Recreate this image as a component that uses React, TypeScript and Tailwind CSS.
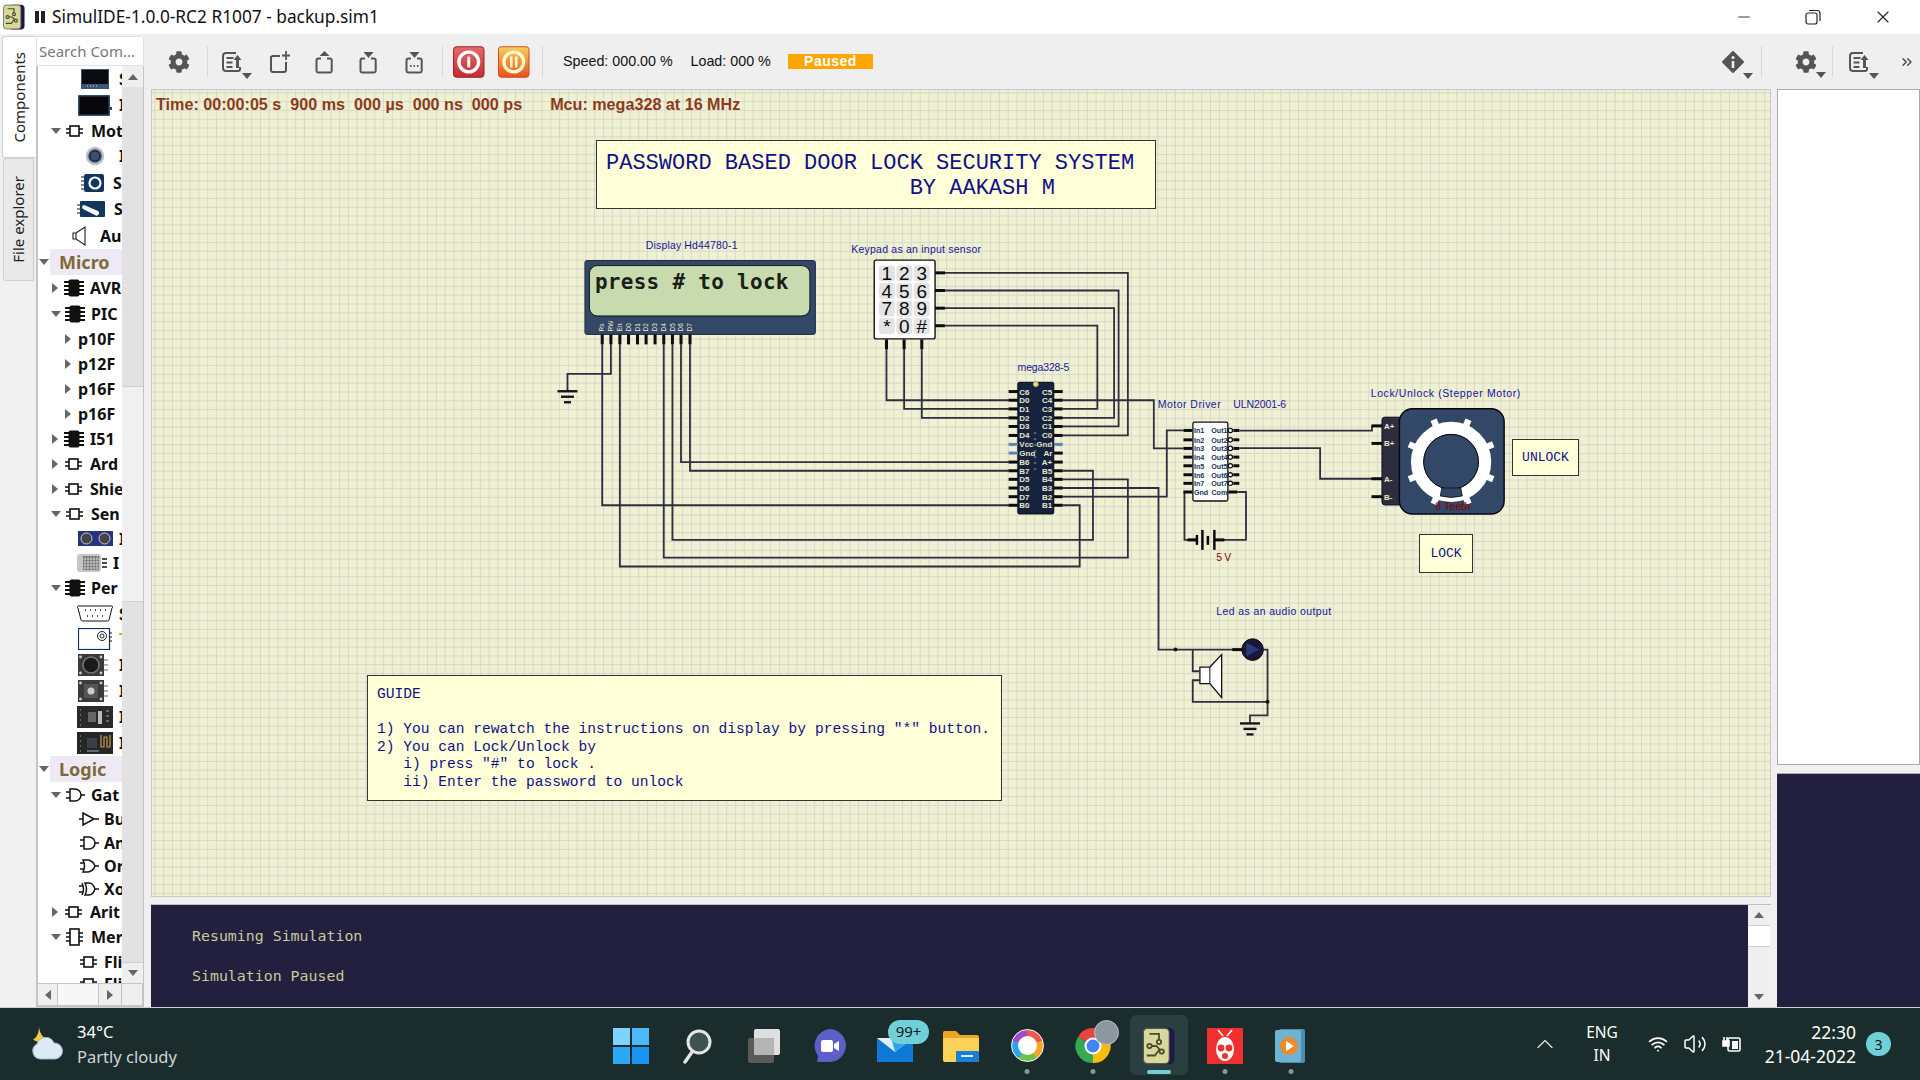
import { ReactNode } from "react";
import { Wifi, Volume2, ChevronUp, ChevronsRight, Minus, X } from "lucide-react";
import { FaCog } from "react-icons/fa";

const wires = [
  "610,344 610,373.5 566.5,373.5 566.5,391",
  "601.3,344 601.3,505.3 1009,505.3",
  "619,344 619,566.7 1080,566.7 1080,505.3 1063,505.3",
  "663,344 663,557.7 1128.3,557.7 1128.3,479.3 1063,479.3",
  "671.7,344 671.7,540 1093.3,540 1093.3,470.7 1063,470.7",
  "680.3,344 680.3,462 1009,462",
  "689.3,344 689.3,470.7 1009,470.7",
  "886.3,349 886.3,400 1009,400",
  "904,349 904,408.7 1009,408.7",
  "921.7,349 921.7,417.7 1009,417.7",
  "945,272.3 1128.3,272.3 1128.3,435.3 1063,435.3",
  "945,290 1119,290 1119,426.3 1063,426.3",
  "945,307.7 1114.5,307.7 1114.5,417.7 1063,417.7",
  "945,325.3 1097.7,325.3 1097.7,408.7 1063,408.7",
  "1063,400 1154.3,400 1154.3,448.3 1184,448.3",
  "1063,496.7 1167.3,496.7 1167.3,430.3 1184,430.3",
  "1063,488 1159,488 1159,650 1242,650",
  "1185,492 1185,540 1197,540",
  "1215,540 1246.7,540 1246.7,492 1238,492",
  "1240,430.5 1373,430.5 1373,425.7",
  "1240,448 1321,448 1321,478.7 1373,478.7",
  "1193.3,650 1193.3,671.7 1200,671.7",
  "1200,680.7 1193.3,680.7 1193.3,702.3 1268.3,702.3",
  "1264,650 1268.3,650 1268.3,716 1250.7,716 1250.7,724",
];

const lcdPins = [
  [601.3, "Rs"], [610, "RW"], [619, "En"], [627.7, "D0"], [636.7, "D1"], [645.3, "D2"],
  [654.3, "D3"], [663, "D4"], [671.7, "D5"], [680.3, "D6"], [689.3, "D7"],
] as const;

const mcuY = [391.3, 400, 408.7, 417.7, 426.3, 435.3, 444.3, 453, 462, 470.7, 479.3, 488, 496.7, 505.3];
const mcuLeft = ["C6", "D0", "D1", "D2", "D3", "D4", "Vcc", "Gnd", "B6", "B7", "D5", "D6", "D7", "B0"];
const mcuRight = ["C5", "C4", "C3", "C2", "C1", "C0", "Gnd", "Ar", "A+", "B5", "B4", "B3", "B2", "B1"];
const ulnY = [430.3, 439.7, 448.3, 457, 465.7, 474.7, 483.3];
const keys = ["1", "2", "3", "4", "5", "6", "7", "8", "9", "*", "0", "#"];

function Ground({ x, y }: { x: number; y: number }) {
  return (
    <g stroke="#15151f" strokeWidth="2.4">
      <line x1={x - 10} x2={x + 10} y1={y} y2={y} />
      <line x1={x - 6.5} x2={x + 6.5} y1={y + 5.5} y2={y + 5.5} />
      <line x1={x - 3.5} x2={x + 3.5} y1={y + 11} y2={y + 11} />
    </g>
  );
}

function Schematic() {
  return (
    <svg
      viewBox="151 89 1620 808"
      className="absolute inset-0 h-full w-full font-['Liberation_Sans',sans-serif]"
    >
      <g fill="none" stroke="#2e2e3e" strokeWidth="1.8">
        {wires.map((w) => (
          <polyline key={w} points={w} />
        ))}
      </g>

      {/* lcd */}
      <text x="645" y="248.5" fontSize="10.5" fill="#16169a" textLength="92">Display Hd44780-1</text>
      <rect x="584" y="260" width="231" height="74" rx="2" fill="#334766" stroke="#1d2a40" />
      <rect x="588.5" y="265" width="221" height="50.5" rx="8" fill="#c8dbae" stroke="#10151c" />
      <text x="594" y="288" fontSize="21" fontWeight="bold" fill="#1a2018" textLength="194" className="font-['DejaVu_Sans_Mono',monospace]">press # to lock</text>
      {lcdPins.map(([x, name]) => (
        <g key={name}>
          <line x1={x} x2={x} y1="334" y2="344" stroke="#0c0c10" strokeWidth="3" />
          <text transform={`translate(${x + 2.3} 331) rotate(-90)`} fontSize="6.5" fill="#efeccb">{name}</text>
        </g>
      ))}
      <Ground x={566.5} y={391} />

      {/* keypad */}
      <text x="851" y="252" fontSize="10.5" fill="#16169a" textLength="130">Keypad as an input sensor</text>
      <rect x="874" y="259.5" width="61" height="79" rx="2" fill="#fff" stroke="#111" strokeWidth="1.4" />
      {keys.map((k, i) => {
        const x = 878.7 + (i % 3) * 17.5;
        const y = 265 + Math.floor(i / 3) * 17.5;
        return (
          <g key={k}>
            <rect x={x} y={y} width="16" height="16" rx="3" fill="#e4e4e4" />
            <text x={x + 8} y={y + 14.8} fontSize="19" textAnchor="middle" fill="#0a0a0a">{k}</text>
          </g>
        );
      })}
      {[272.3, 290, 307.7, 325.3].map((y) => (
        <line key={y} x1="935" x2="945" y1={y} y2={y} stroke="#0c0c10" strokeWidth="3" />
      ))}
      {[886.3, 904, 921.7].map((x) => (
        <line key={x} x1={x} x2={x} y1="339" y2="349" stroke="#0c0c10" strokeWidth="3" />
      ))}

      {/* mcu */}
      <text x="1017.7" y="370.5" fontSize="10.5" fill="#16169a" textLength="52">mega328-5</text>
      <rect x="1018" y="382" width="36" height="132" rx="1.5" fill="#16233f" stroke="#05070f" />
      <circle cx="1036" cy="384" r="2.5" fill="#f2e840" stroke="#98a0b0" />
      {mcuY.map((y, i) => (
        <g key={y}>
          <line x1="1008.7" x2="1018" y1={y} y2={y} stroke={i === 6 || i === 7 ? "#5f86b3" : "#0c0c10"} strokeWidth="3" />
          <line x1="1054" x2="1063" y1={y} y2={y} stroke={i === 6 ? "#5f86b3" : "#0c0c10"} strokeWidth="3" />
          <text x="1019.5" y={y + 3} fontSize="8" fontWeight="bold" fill="#e9e5c8">{mcuLeft[i]}</text>
          <text x="1052.5" y={y + 3} fontSize="8" fontWeight="bold" fill="#e9e5c8" textAnchor="end">{mcuRight[i]}</text>
        </g>
      ))}
      {[432, 438, 444, 450, 456, 462, 468].map((y) => (
        <rect key={y} x="1034" y={y} width="2.5" height="2" fill="#55607a" />
      ))}

      {/* driver */}
      <text x="1158.3" y="407.5" fontSize="10.5" fill="#16169a" textLength="63">Motor Driver</text>
      <text x="1234" y="407.5" fontSize="10.5" fill="#16169a" textLength="53">ULN2001-6</text>
      <rect x="1193.5" y="422" width="35" height="79" rx="1.5" fill="#fff" stroke="#111" strokeWidth="1.3" />
      {ulnY.map((y, i) => (
        <g key={y}>
          <line x1="1184" x2="1193" y1={y} y2={y} stroke="#0c0c10" strokeWidth="3" />
          <line x1="1234" x2="1240" y1={y} y2={y} stroke="#0c0c10" strokeWidth="3" />
          <circle cx="1231" cy={y} r="2.2" fill="#fff" stroke="#0c0c10" strokeWidth="1.2" />
          <text x="1194.5" y={y + 3} fontSize="7.2" fontWeight="bold" fill="#15365a">{`In${i + 1}`}</text>
          <text x="1228.2" y={y + 3} fontSize="7.2" fontWeight="bold" fill="#15365a" textAnchor="end">{`Out${i + 1}`}</text>
        </g>
      ))}
      <line x1="1184" x2="1193" y1="492" y2="492" stroke="#0c0c10" strokeWidth="3" />
      <line x1="1229" x2="1238" y1="492" y2="492" stroke="#0c0c10" strokeWidth="3" />
      <text x="1194.5" y="495" fontSize="7.2" fontWeight="bold" fill="#15365a">Gnd</text>
      <text x="1228" y="495" fontSize="7.2" fontWeight="bold" fill="#15365a" textAnchor="end">Com</text>

      {/* battery */}
      <g stroke="#0c0c10">
        <line x1="1188" x2="1197" y1="540" y2="540" strokeWidth="3" />
        <line x1="1215" x2="1225" y1="540" y2="540" strokeWidth="3" />
        <line x1="1197.5" x2="1197.5" y1="535" y2="545" strokeWidth="2.5" />
        <line x1="1203" x2="1203" y1="530" y2="550" strokeWidth="2.5" />
        <line x1="1208.5" x2="1208.5" y1="536" y2="545" strokeWidth="2.5" />
        <line x1="1215" x2="1215" y1="530" y2="550" strokeWidth="2.5" />
      </g>
      <text x="1217" y="561" fontSize="10.5" fill="#8b0000" textLength="15">5 V</text>

      {/* stepper */}
      <text x="1371.7" y="396.5" fontSize="10.5" fill="#16169a" textLength="150">Lock/Unlock  (Stepper Motor)</text>
      <rect x="1383" y="417" width="20" height="88" rx="3" fill="#2d2d40" stroke="#111" />
      <rect x="1400.5" y="408.5" width="105" height="105.5" rx="13" fill="#334766" stroke="#05070f" strokeWidth="1.4" />
      {[425.7, 443.3, 478.7, 496.7].map((y, i) => (
        <g key={y}>
          <line x1="1372.5" x2="1383" y1={y} y2={y} stroke="#0c0c10" strokeWidth="3" />
          <text x="1385" y={y + 3} fontSize="8" fontWeight="bold" fill="#f0e8c0">{["A+", "B+", "A-", "B-"][i]}</text>
        </g>
      ))}
      {[22.5, 67.5, 112.5, 157.5, 202.5, 247.5, 292.5, 337.5].map((a) => (
        <rect key={a} x="1449" y="416" width="6.5" height="10" fill="#fff" transform={`rotate(${a} 1452.3 461.7)`} />
      ))}
      <circle cx="1452.3" cy="461.7" r="34" fill="none" stroke="#fff" strokeWidth="12.5" />
      <circle cx="1452.3" cy="461.7" r="27.5" fill="#334766" stroke="#05070f" />
      <path d="M1443 488 L1462 488 L1463.5 496 Q1452 499 1441.5 496 Z" fill="#334766" stroke="#05070f" strokeWidth="0.8" />
      <text x="1436.5" y="510.5" fontSize="10.5" fill="#8b0000" textLength="35">8 Teeth</text>

      {/* led and speaker */}
      <text x="1217" y="615.5" fontSize="10.5" fill="#16169a" textLength="115">Led as an audio output</text>
      <circle cx="1176" cy="650" r="2" fill="#111" />
      <circle cx="1268.3" cy="702.3" r="2" fill="#111" />
      <line x1="1233" x2="1243" y1="650" y2="650" stroke="#0c0c10" strokeWidth="3" />
      <circle cx="1253.3" cy="650" r="10.8" fill="#1a1738" stroke="#0c0c10" />
      <path d="M1247 643 L1260 650 L1247 657 Z" fill="#2b3a78" />
      <path d="M1200.5 667.5 L1210.5 667.5 L1222.3 655 L1222.3 698 L1210.5 684 L1200.5 684 Z" fill="#fff" stroke="#111" strokeWidth="1.3" />
      <line x1="1210.5" x2="1210.5" y1="667.5" y2="684" stroke="#111" />
      <Ground x={1250.7} y={724} />
    </svg>
  );
}

function Canvas() {
  return (
    <div className="relative h-[808px] overflow-hidden border border-[#c8c8c8] bg-[#f0f0d2] bg-[linear-gradient(to_right,#d8d8cc_1.4px,transparent_1.4px),linear-gradient(to_bottom,#d8d8cc_1.4px,transparent_1.4px)] bg-[size:8.8px_8.8px] bg-[position:2.4px_2.4px]">
      <Schematic />
      <div className="absolute left-[4px] top-[5px] flex whitespace-pre font-['Liberation_Sans',sans-serif] text-[16.15px] font-bold leading-[18px] text-[#8b3a1e]">
        <span>Time: 00:00:05 s  900 ms  000 µs  000 ns  000 ps</span>
        <span className="ml-[28px]">Mcu: mega328 at 16 MHz</span>
      </div>
      <div className="absolute left-[444px] top-[50px] h-[69px] w-[560px] whitespace-pre border border-[#333] bg-[#ffffd8] pl-[9px] pt-[11px] font-['Liberation_Mono',monospace] text-[22px] leading-[24.5px] text-[#10108a]">
        {"PASSWORD BASED DOOR LOCK SECURITY SYSTEM\n                       BY AAKASH M"}
      </div>
      <div className="absolute left-[215px] top-[585px] h-[126px] w-[635px] whitespace-pre border border-[#333] bg-[#ffffd8] pl-[9px] pt-[10px] font-['Liberation_Mono',monospace] text-[14.6px] leading-[17.6px] text-[#10108a]">
        {'GUIDE\n\n1) You can rewatch the instructions on display by pressing "*" button.\n2) You can Lock/Unlock by\n   i) press "#" to lock .\n   ii) Enter the password to unlock'}
      </div>
      <div className="absolute left-[1360px] top-[349px] flex h-[37px] w-[67px] items-center justify-center border border-[#333] bg-[#ffffd8] font-['Liberation_Mono',monospace] text-[13px] text-[#10108a]">
        UNLOCK
      </div>
      <div className="absolute left-[1267px] top-[444px] flex h-[39px] w-[54px] items-center justify-center border border-[#333] bg-[#ffffd8] font-['Liberation_Mono',monospace] text-[13px] text-[#10108a]">
        LOCK
      </div>
    </div>
  );
}

function Caret({ dir = "down" }: { dir?: "down" | "right" | "up" | "left" }) {
  if (dir === "down")
    return <div className="h-0 w-0 border-x-[5px] border-t-[6px] border-x-transparent border-t-[#666]" />;
  if (dir === "up")
    return <div className="h-0 w-0 border-x-[5px] border-b-[6px] border-x-transparent border-b-[#666]" />;
  if (dir === "left")
    return <div className="h-0 w-0 border-y-[5px] border-r-[6px] border-y-transparent border-r-[#666]" />;
  return <div className="h-0 w-0 border-y-[5px] border-l-[6px] border-y-transparent border-l-[#666]" />;
}

function DropArrow() {
  return (
    <div className="absolute -right-[8px] bottom-[-5px] h-0 w-0 border-x-[5px] border-t-[6px] border-x-transparent border-t-[#555]" />
  );
}

function DocUp() {
  return (
    <svg viewBox="0 0 24 24" className="h-6 w-6" fill="none" stroke="#555" strokeWidth="2">
      <path d="M16 3H6a3 3 0 0 0-3 3v12a3 3 0 0 0 3 3h12a2 2 0 0 0 2-2v-2" />
      <path d="M6.5 8h7M6.5 12.5h6M6.5 17h6" />
      <path d="M17.5 18V9" strokeWidth="3" />
      <path d="M13.5 10l4-5 4 5z" fill="#555" stroke="none" />
    </svg>
  );
}

function NewDoc() {
  return (
    <svg viewBox="0 0 24 24" className="h-6 w-6" fill="none" stroke="#555" strokeWidth="2">
      <path d="M13 6H6a3 3 0 0 0-2 1v13a2 2 0 0 0 2 2h11a2 2 0 0 0 2-2v-8" />
      <path d="M19 1v9M15 5.5h8" strokeWidth="1.8" />
    </svg>
  );
}

function SaveDoc({ kind }: { kind: "open" | "save" | "as" }) {
  return (
    <svg viewBox="0 0 24 24" className="h-6 w-6" fill="none" stroke="#555" strokeWidth="2">
      <path d="M9 8.5H6.5a2 2 0 0 0-2 2V21a1.6 1.6 0 0 0 1.6 1.5h12a1.6 1.6 0 0 0 1.6-1.5V11a2 2 0 0 0-2-2.5H15" />
      {kind === "open" ? (
        <path d="M7.5 6l5-5 5 5z" fill="#555" stroke="none" />
      ) : (
        <path d="M7.5 2l5 6 5-6z" fill="#555" stroke="none" />
      )}
      {kind === "as" && <path d="M8 16h1.5M11.5 16H13M15 16h1.5" strokeWidth="2" />}
    </svg>
  );
}

function PowerButton({ pause }: { pause?: boolean }) {
  const id = pause ? "pb" : "rb";
  return (
    <svg viewBox="0 0 32 32" className="h-8 w-[31.5px]">
      <defs>
        <linearGradient id={id} x1="0" x2="0" y1="0" y2="1">
          <stop offset="0" stopColor={pause ? "#f9d15c" : "#e46a6a"} />
          <stop offset="1" stopColor={pause ? "#e84e1a" : "#c42b30"} />
        </linearGradient>
      </defs>
      <rect x="0.5" y="0.5" width="31" height="31" rx="3" fill={`url(#${id})`} stroke={pause ? "#d8481a" : "#9c2024"} />
      <circle cx="16" cy="16" r="10" fill="none" stroke={pause ? "#fff6d0" : "#fff"} strokeWidth="3.4" />
      {pause ? (
        <path d="M13.5 10.5v11M18.5 10.5v11" stroke="#fff6d0" strokeWidth="2.6" />
      ) : (
        <path d="M16 10.5v11" stroke="#fff" strokeWidth="3" />
      )}
    </svg>
  );
}

function Sep({ cls }: { cls: string }) {
  return <div className={`h-[31px] w-px bg-[#d8d8d8] ${cls}`} />;
}

function Toolbar() {
  return (
    <div className="flex h-[55px] items-center bg-[#efefef] font-['Liberation_Sans',sans-serif] text-[14.3px] text-[#111]">
      <div className="ml-[23px] flex w-6 justify-center"><FaCog className="h-[22px] w-[22px] text-[#555]" /></div>
      <Sep cls="ml-[16px]" />
      <div className="relative ml-[12px]"><DocUp /><DropArrow /></div>
      <div className="ml-[22.5px]"><NewDoc /></div>
      <div className="ml-[21px]"><SaveDoc kind="open" /></div>
      <div className="ml-[20.5px]"><SaveDoc kind="save" /></div>
      <div className="ml-[22px]"><SaveDoc kind="as" /></div>
      <Sep cls="ml-[16px]" />
      <div className="ml-[10px]"><PowerButton /></div>
      <div className="ml-[13.5px]"><PowerButton pause /></div>
      <Sep cls="ml-[12px]" />
      <div className="ml-[20.5px] w-[127.5px]">Speed: 000.00 %</div>
      <div className="w-[97.5px]">Load: 000 %</div>
      <div className="flex h-[15px] w-[85px] items-center justify-center bg-[#ffa500] text-[14px] font-bold tracking-[0.5px] text-white">
        Paused
      </div>
      <div className="relative ml-auto flex w-6 justify-center">
        <svg viewBox="0 0 24 24" className="h-6 w-6">
          <path d="M12 2l10 10-10 10L2 12z" fill="#555" stroke="#555" strokeWidth="2" strokeLinejoin="round" />
          <circle cx="12" cy="7.5" r="1.6" fill="#efefef" />
          <path d="M12 11v7" stroke="#efefef" strokeWidth="2.6" />
        </svg>
        <DropArrow />
      </div>
      <Sep cls="ml-[16px]" />
      <div className="relative ml-[32px] flex w-6 justify-center">
        <FaCog className="h-[22px] w-[22px] text-[#555]" />
        <DropArrow />
      </div>
      <Sep cls="ml-[14px]" />
      <div className="relative ml-[14px]"><DocUp /><DropArrow /></div>
      <div className="ml-[28px] mr-[5px]"><ChevronsRight className="h-4 w-4 text-[#444]" /></div>
    </div>
  );
}

function ChipIcon() {
  return (
    <svg viewBox="0 0 20 18" className="h-[18px] w-5">
      <rect x="4.5" y="0.5" width="11" height="17" rx="2" fill="#111" />
      <path d="M0 3h20M0 7h20M0 11h20M0 15h20" stroke="#111" strokeWidth="2" />
    </svg>
  );
}

function BoxIcon({ tall }: { tall?: boolean }) {
  return (
    <svg viewBox="0 0 20 18" className="h-[18px] w-5" fill="none" stroke="#111" strokeWidth="1.6">
      <rect x="5" y={tall ? 1 : 4} width="9" height={tall ? 16 : 10} fill="#fff" />
      {tall ? (
        <path d="M1 5h4M1 9h4M1 13h4M14 5h4M14 9h4M14 13h4" />
      ) : (
        <path d="M1 7h4M1 11h4M14 7h4M14 11h4" />
      )}
    </svg>
  );
}

function GateIcon({ kind = "and" }: { kind?: "and" | "or" | "xor" | "buf" }) {
  return (
    <svg viewBox="0 0 20 16" className="h-4 w-5" fill="none" stroke="#111" strokeWidth="1.5">
      {kind === "buf" && <path d="M4 2l11 6-11 6zM0 8h4M15 8h5" />}
      {kind === "and" && <path d="M5 2h5a6 6 0 0 1 0 12H5zM1 5h4M1 11h4M16 8h4" />}
      {kind === "or" && <path d="M4 2h5c3 0 6 3 7 6-1 3-4 6-7 6H4c2-4 2-8 0-12zM1 5h4M1 11h4M16 8h4" />}
      {kind === "xor" && <path d="M6 2h4c3 0 5 3 6 6-1 3-3 6-6 6H6c2-4 2-8 0-12zM3 2c2 4 2 8 0 12M0 5h4M0 11h4M16 8h4" />}
    </svg>
  );
}

function MiniIcon({ kind }: { kind: string }) {
  if (kind === "lcd")
    return (
      <svg viewBox="0 0 28 20" className="h-5 w-7">
        <rect width="28" height="20" fill="#3d5474" />
        <rect x="1" y="1" width="26" height="14" fill="#0a0a10" />
        <path d="M6 17h1M9 17h1M12 17h1M15 17h1" stroke="#ddd" />
      </svg>
    );
  if (kind === "glcd")
    return (
      <svg viewBox="0 0 34 21" className="h-[21px] w-[34px]">
        <rect width="32" height="21" rx="1" fill="#2b5270" />
        <rect x="1.5" y="1.5" width="29" height="18" fill="#08080c" />
        <rect x="32" y="12" width="2" height="3" fill="#444" />
      </svg>
    );
  if (kind === "stepper")
    return (
      <svg viewBox="0 0 20 20" className="h-5 w-5">
        <circle cx="10" cy="10" r="8" fill="#3e4f6c" stroke="#b8bdc8" strokeWidth="2.4" />
        <circle cx="10" cy="10" r="5" fill="#3e4f6c" stroke="#111b33" strokeWidth="1" />
      </svg>
    );
  if (kind === "servo")
    return (
      <svg viewBox="0 0 24 20" className="h-5 w-6">
        <path d="M0 4h4M0 8h4M0 12h4M0 16h4" stroke="#111" />
        <rect x="3" y="1" width="20" height="18" rx="2" fill="#12365e" />
        <circle cx="14" cy="10" r="5.5" fill="none" stroke="#fff" strokeWidth="2.2" />
      </svg>
    );
  if (kind === "dc")
    return (
      <svg viewBox="0 0 28 16" className="h-4 w-7">
        <path d="M0 4h4M0 8h4M0 12h4" stroke="#111" />
        <rect x="3" y="0" width="25" height="16" rx="1" fill="#12365e" />
        <path d="M7 4l14 6a2.5 2.5 0 0 1-3 4L6 8a2.2 2.2 0 0 1 1-4z" fill="#fff" />
      </svg>
    );
  if (kind === "audio")
    return (
      <svg viewBox="0 0 16 20" className="h-5 w-4" fill="none" stroke="#222" strokeWidth="1.1">
        <path d="M5 7h-3v6h3M5 7l9-6v18l-9-6zM5 7v6" />
      </svg>
    );
  if (kind === "sonar")
    return (
      <svg viewBox="0 0 35 15" className="h-[15px] w-[35px]">
        <rect width="35" height="15" fill="#26347e" />
        <circle cx="8.5" cy="7.5" r="5.5" fill="#444" stroke="#ccc" />
        <circle cx="26.5" cy="7.5" r="5.5" fill="#444" stroke="#ccc" />
      </svg>
    );
  if (kind === "dht")
    return (
      <svg viewBox="0 0 30 18" className="h-[18px] w-[30px]">
        <rect width="24" height="18" rx="3" fill="#c6c6c6" />
        <rect x="6" y="2" width="16" height="14" fill="#666" />
        <path d="M8 2v14M11 2v14M14 2v14M17 2v14M20 2v14M6 5h16M6 8h16M6 11h16M6 14h16" stroke="#ddd" strokeWidth="0.8" />
        <path d="M25 5h5M25 9h5M25 13h5" stroke="#111" strokeWidth="1.5" />
      </svg>
    );
  if (kind === "db9")
    return (
      <svg viewBox="0 0 36 17" className="h-[17px] w-9">
        <path d="M2 1h32a1 1 0 0 1 1 2l-3 12a1.5 1.5 0 0 1-1.5 1H5.5A1.5 1.5 0 0 1 4 15L1 3a1 1 0 0 1 1-2z" fill="#fff" stroke="#111" />
        <path d="M8 5h1M13 5h1M18 5h1M23 5h1M28 5h1M10 11h1M15 11h1M20 11h1M25 11h1" stroke="#111" strokeWidth="1.6" />
      </svg>
    );
  if (kind === "tft")
    return (
      <svg viewBox="0 0 34 22" className="h-[22px] w-[34px]">
        <rect x="0.5" y="0.5" width="31" height="21" fill="#fff" stroke="#12305a" strokeWidth="1.2" />
        <circle cx="24" cy="8" r="4.5" fill="none" stroke="#222" />
        <circle cx="24" cy="8" r="2" fill="none" stroke="#222" />
        <path d="M32 5h2M32 9h2M32 13h2" stroke="#111" />
      </svg>
    );
  if (kind === "joy" || kind === "enc")
    return (
      <svg viewBox="0 0 30 22" className="h-[22px] w-[30px]">
        <rect width="26" height="22" fill="#3a3a3a" />
        <circle cx="2.5" cy="3" r="1.4" fill="#ccc" />
        <circle cx="2.5" cy="19" r="1.4" fill="#ccc" />
        <circle cx="23" cy="3" r="1.4" fill="#ccc" />
        <circle cx="23" cy="19" r="1.4" fill="#ccc" />
        {kind === "joy" ? (
          <circle cx="13" cy="11" r="8" fill="#1a1a1a" stroke="#777" strokeWidth="1.5" />
        ) : (
          <>
            <rect x="6" y="4" width="14" height="14" fill="#555" />
            <circle cx="13" cy="11" r="3.5" fill="#ccc" />
          </>
        )}
        <path d="M26 6h4M26 11h4M26 16h4" stroke="#999" strokeWidth="1.4" />
      </svg>
    );
  if (kind === "esp")
    return (
      <svg viewBox="0 0 36 22" className="h-[22px] w-9">
        <rect width="36" height="22" fill="#2a2a2a" />
        <rect x="11" y="6" width="8" height="10" fill="#666" />
        <rect x="21" y="5" width="4" height="13" fill="#bbb" />
        <path d="M3 4h1M3 9h1M3 14h1M3 19h1M29 5h3M29 10h3M29 15h3" stroke="#aaa" />
      </svg>
    );
  return (
    <svg viewBox="0 0 36 22" className="h-[22px] w-9">
      <rect width="36" height="22" fill="#262626" />
      <rect x="10" y="6" width="10" height="10" fill="#3a4048" />
      <path d="M24 3v12h3V5h3v10h3V3" fill="none" stroke="#c49a58" strokeWidth="1.2" />
      <path d="M3 4h1M3 9h1M3 14h1M3 19h1M10 19h12" stroke="#aaa" />
    </svg>
  );
}

type Row = {
  h: string;
  pl: string;
  caret?: "down" | "right";
  caretGap?: string;
  icon?: ReactNode;
  ml?: string;
  label: string;
  labelCls?: string;
};

const rows: Row[] = [
  { h: "h-[26px]", pl: "pl-[43px]", icon: <MiniIcon kind="lcd" />, ml: "ml-[10px]", label: "S" },
  { h: "h-[26px]", pl: "pl-[40px]", icon: <MiniIcon kind="glcd" />, ml: "ml-[7px]", label: "I" },
  { h: "h-[25px]", pl: "pl-[13px]", caret: "down", caretGap: "ml-[4px]", icon: <BoxIcon />, ml: "ml-[6px]", label: "Mot" },
  { h: "h-[26px]", pl: "pl-[47px]", icon: <MiniIcon kind="stepper" />, ml: "ml-[14px]", label: "I" },
  { h: "h-[27px]", pl: "pl-[43px]", icon: <MiniIcon kind="servo" />, ml: "ml-[8px]", label: "S" },
  { h: "h-[26px]", pl: "pl-[39px]", icon: <MiniIcon kind="dc" />, ml: "ml-[9px]", label: "S" },
  { h: "h-[27px]", pl: "pl-[33px]", icon: <MiniIcon kind="audio" />, ml: "ml-[13px]", label: "Au" },
  { h: "h-[26px]", pl: "pl-0", label: "Micro" },
  { h: "h-[26px]", pl: "pl-[14px]", caret: "right", caretGap: "ml-[6px]", icon: <ChipIcon />, ml: "ml-[6px]", label: "AVR" },
  { h: "h-[25px]", pl: "pl-[13px]", caret: "down", caretGap: "ml-[4px]", icon: <ChipIcon />, ml: "ml-[6px]", label: "PIC" },
  { h: "h-[25px]", pl: "pl-[27px]", caret: "right", caretGap: "ml-[7px]", label: "p10F" },
  { h: "h-[25px]", pl: "pl-[27px]", caret: "right", caretGap: "ml-[7px]", label: "p12F" },
  { h: "h-[25px]", pl: "pl-[27px]", caret: "right", caretGap: "ml-[7px]", label: "p16F" },
  { h: "h-[25px]", pl: "pl-[27px]", caret: "right", caretGap: "ml-[7px]", label: "p16F" },
  { h: "h-[25px]", pl: "pl-[14px]", caret: "right", caretGap: "ml-[6px]", icon: <ChipIcon />, ml: "ml-[6px]", label: "I51" },
  { h: "h-[26px]", pl: "pl-[14px]", caret: "right", caretGap: "ml-[6px]", icon: <BoxIcon />, ml: "ml-[6px]", label: "Ard" },
  { h: "h-[24px]", pl: "pl-[14px]", caret: "right", caretGap: "ml-[6px]", icon: <BoxIcon />, ml: "ml-[6px]", label: "Shie" },
  { h: "h-[25px]", pl: "pl-[13px]", caret: "down", caretGap: "ml-[4px]", icon: <BoxIcon />, ml: "ml-[6px]", label: "Sen" },
  { h: "h-[25px]", pl: "pl-[40px]", icon: <MiniIcon kind="sonar" />, ml: "ml-[6px]", label: "I" },
  { h: "h-[24px]", pl: "pl-[39px]", icon: <MiniIcon kind="dht" />, ml: "ml-[6px]", label: "I" },
  { h: "h-[26px]", pl: "pl-[13px]", caret: "down", caretGap: "ml-[4px]", icon: <ChipIcon />, ml: "ml-[6px]", label: "Per" },
  { h: "h-[25px]", pl: "pl-[39px]", icon: <MiniIcon kind="db9" />, ml: "ml-[6px]", label: "S" },
  { h: "h-[26px]", pl: "pl-[40px]", icon: <MiniIcon kind="tft" />, ml: "ml-[7px]", label: "T", labelCls: "text-[#e0a030]" },
  { h: "h-[26px]", pl: "pl-[40px]", icon: <MiniIcon kind="joy" />, ml: "ml-[11px]", label: "I" },
  { h: "h-[26px]", pl: "pl-[40px]", icon: <MiniIcon kind="enc" />, ml: "ml-[11px]", label: "I" },
  { h: "h-[26px]", pl: "pl-[39px]", icon: <MiniIcon kind="esp" />, ml: "ml-[6px]", label: "I" },
  { h: "h-[26px]", pl: "pl-[39px]", icon: <MiniIcon kind="esp2" />, ml: "ml-[6px]", label: "I" },
  { h: "h-[26px]", pl: "pl-0", label: "Logic" },
  { h: "h-[25px]", pl: "pl-[13px]", caret: "down", caretGap: "ml-[4px]", icon: <GateIcon />, ml: "ml-[6px]", label: "Gat" },
  { h: "h-[24px]", pl: "pl-[41px]", icon: <GateIcon kind="buf" />, ml: "ml-[5px]", label: "Bu" },
  { h: "h-[23px]", pl: "pl-[41px]", icon: <GateIcon />, ml: "ml-[5px]", label: "An" },
  { h: "h-[24px]", pl: "pl-[41px]", icon: <GateIcon kind="or" />, ml: "ml-[5px]", label: "Or" },
  { h: "h-[22px]", pl: "pl-[41px]", icon: <GateIcon kind="xor" />, ml: "ml-[5px]", label: "Xo" },
  { h: "h-[24px]", pl: "pl-[14px]", caret: "right", caretGap: "ml-[6px]", icon: <BoxIcon />, ml: "ml-[6px]", label: "Arit" },
  { h: "h-[25px]", pl: "pl-[13px]", caret: "down", caretGap: "ml-[4px]", icon: <BoxIcon tall />, ml: "ml-[6px]", label: "Mer" },
  { h: "h-[26px]", pl: "pl-[41px]", icon: <BoxIcon />, ml: "ml-[5px]", label: "Fli" },
  { h: "h-[18px]", pl: "pl-[41px]", icon: <BoxIcon />, ml: "ml-[5px]", label: "Fli" },
];

function Tree() {
  return (
    <div className="flex h-[973px] w-[108px] flex-col pt-[2px] font-['Noto_Sans',sans-serif]">
      <div className="flex h-[30px] shrink-0 items-center rounded-[3px] border border-[#e2e2e2] bg-white pl-[2px] text-[15px] text-[#777]">
        Search Com...
      </div>
      <div className="flex min-h-0 flex-1 flex-col border-x-2 border-b-2 border-[#c4c4c4] bg-white">
        <div className="flex min-h-0 flex-1">
          <div className="w-[84px] shrink-0 overflow-hidden">
            {rows.map((r, i) => {
              const cat = r.label === "Micro" || r.label === "Logic";
              return cat ? (
                <div key={r.label} className={`flex items-center ${r.h}`}>
                  <div className="flex w-[12px] justify-center"><Caret /></div>
                  <div className="flex h-full flex-1 items-center bg-[#efe9f5] pl-[9px] text-[18px] font-bold text-[#7d6a3a]">
                    {r.label}
                  </div>
                </div>
              ) : (
                <div key={i} className={`flex items-center whitespace-nowrap ${r.h} ${r.pl}`}>
                  {r.caret && <Caret dir={r.caret} />}
                  <div className={r.caretGap}>{r.icon}</div>
                  <span className={`text-[16px] font-bold leading-none text-[#101010] ${r.ml ?? ""} ${r.labelCls ?? ""}`}>
                    {r.label}
                  </span>
                </div>
              );
            })}
          </div>
          <div className="flex w-[21px] shrink-0 flex-col bg-[#e2e2e2]">
            <div className="flex h-[21px] items-center justify-center bg-[#efefef]"><Caret dir="up" /></div>
            <div className="h-[299px]" />
            <div className="h-[216px] border-y border-[#d0d0d0] bg-[#f0f0f0]" />
            <div className="flex-1" />
            <div className="flex h-[21px] items-center justify-center border-t border-[#d0d0d0] bg-[#efefef]"><Caret /></div>
          </div>
        </div>
        <div className="flex h-[22px] shrink-0 border-t border-[#c4c4c4] bg-[#efefef]">
          <div className="flex w-[20px] items-center justify-center border-r border-[#c4c4c4]"><Caret dir="left" /></div>
          <div className="w-[41px] border-r border-[#c4c4c4] bg-[#f7f7f7]" />
          <div className="flex w-[23px] items-center justify-center border-r border-[#c4c4c4]"><Caret dir="right" /></div>
        </div>
      </div>
    </div>
  );
}

function Tabs() {
  return (
    <div className="flex w-[36px] flex-col items-end pt-[2px] font-['Noto_Sans',sans-serif] text-[15px] text-[#222]">
      <div className="flex h-[122px] w-[34px] items-center justify-center rounded-l-[3px] border-y border-l border-[#d0d0d0] bg-white">
        <span className="rotate-180 [writing-mode:vertical-rl]">Components</span>
      </div>
      <div className="mr-[2px] flex h-[123px] w-[31px] items-center justify-center rounded-l-[3px] border border-[#d0d0d0] bg-[#e9e9e9]">
        <span className="rotate-180 [writing-mode:vertical-rl]">File explorer</span>
      </div>
    </div>
  );
}

function Output() {
  return (
    <div className="flex h-[103px] border-t border-[#c0c0c0]">
      <div className="w-[1597px] bg-[#231f3f] pl-[41px] pt-[21px] font-['DejaVu_Sans_Mono',monospace] text-[14.9px] text-[#c9c99a]">
        <div className="h-[40px] leading-[20px]">Resuming Simulation</div>
        <div className="leading-[20px]">Simulation Paused</div>
      </div>
      <div className="flex w-[22px] flex-col items-center bg-[#efefef]">
        <div className="flex h-[20px] items-center"><Caret dir="up" /></div>
        <div className="h-[22px] w-full border-y border-[#ccc] bg-white" />
        <div className="flex-1" />
        <div className="flex h-[20px] items-center"><Caret /></div>
      </div>
    </div>
  );
}

function AppLogo({ cls }: { cls: string }) {
  return (
    <svg viewBox="0 0 24 28" className={cls}>
      <rect x="6" y="0.5" width="17.5" height="27" rx="4" fill="#1d1848" />
      <rect x="0.5" y="1" width="19" height="26" rx="3" fill="#d8d89a" stroke="#555" strokeWidth="0.8" />
      <g stroke="#4a4a30" strokeWidth="1.3" fill="none">
        <path d="M5 5h7v5M5 14h5l3 3M3 21h6l3-4" />
        <circle cx="12" cy="11" r="1.6" fill="#d8d89a" />
        <circle cx="5" cy="14" r="1.6" fill="#d8d89a" />
        <circle cx="14" cy="18" r="1.6" fill="#d8d89a" />
      </g>
    </svg>
  );
}

function TaskSlot({ children, dot, active }: { children: ReactNode; dot?: boolean; active?: boolean }) {
  return (
    <div className="relative flex h-[65px] w-[66px] items-center justify-center pb-[4px]">
      {active && <div className="absolute bottom-[5px] left-[4px] right-[4px] top-0 rounded-md bg-[#2a4040]" />}
      <div className="relative flex items-center justify-center">{children}</div>
      {dot && <div className="absolute bottom-[6px] left-1/2 h-[5px] w-[5px] -translate-x-1/2 rounded-full bg-[#8a9494]" />}
      {active && <div className="absolute bottom-[6px] left-1/2 h-[4px] w-[24px] -translate-x-1/2 rounded-full bg-[#6fd0d8]" />}
    </div>
  );
}

function Taskbar() {
  return (
    <div className="flex h-[73px] items-center border-t border-[#cfcfcf] bg-[#1a2d2c] font-['Noto_Sans',sans-serif] text-white">
      <div className="flex w-[598px] items-center pl-[28px]">
        <svg viewBox="0 0 36 38" className="h-[38px] w-[36px]">
          <path d="M11 2c1 6 3 10 9 13-4 3-12 3-15-1 3 0 6-6 6-12z" fill="#f6c83a" />
          <path d="M12 34a8 8 0 0 1-3-15 9 9 0 0 1 17-1 8 8 0 0 1 1 16z" fill="#dceaf5" stroke="#9bb8cc" />
        </svg>
        <div className="ml-[13px] flex flex-col gap-[3px]">
          <span className="text-[16.5px] leading-[22px]">34°C</span>
          <span className="text-[16.5px] leading-[22px] text-[#d0d4d4]">Partly cloudy</span>
        </div>
      </div>
      <div className="flex items-end self-end">
        <TaskSlot>
          <svg viewBox="0 0 36 36" className="h-9 w-9">
            <rect x="0" y="0" width="17" height="17" fill="#7dd3fb" />
            <rect x="19" y="0" width="17" height="17" fill="#4cb8f6" />
            <rect x="0" y="19" width="17" height="17" fill="#2aa8f5" />
            <rect x="19" y="19" width="17" height="17" fill="#1795f0" />
          </svg>
        </TaskSlot>
        <TaskSlot>
          <svg viewBox="0 0 36 36" className="h-9 w-9">
            <circle cx="20" cy="14" r="11" fill="#3f5252" stroke="#e4e6e6" strokeWidth="3" />
            <path d="M13 24l-7 10" stroke="#e4e6e6" strokeWidth="3.4" strokeLinecap="round" />
          </svg>
        </TaskSlot>
        <TaskSlot>
          <svg viewBox="0 0 36 36" className="h-9 w-9">
            <rect x="3" y="10" width="26" height="25" rx="2" fill="#5a5a5a" />
            <rect x="9" y="1" width="26" height="26" rx="2" fill="#e9e9e9" fillOpacity="0.95" />
            <rect x="9" y="10" width="20" height="17" fill="#b5b5b5" />
          </svg>
        </TaskSlot>
        <TaskSlot>
          <svg viewBox="0 0 36 36" className="h-9 w-9">
            <path d="M18 1a17 17 0 0 1 17 17 17 17 0 0 1-17 16H6l1-6a17 17 0 0 1 11-27z" fill="#5b5fc7" />
            <rect x="10" y="12" width="12" height="12" rx="2" fill="#fff" />
            <path d="M23 16l5-3v10l-5-3z" fill="#fff" />
          </svg>
        </TaskSlot>
        <TaskSlot>
          <svg viewBox="0 0 36 32" className="h-8 w-9">
            <rect x="0" y="8" width="36" height="24" fill="#0f78d4" />
            <path d="M0 8l18 14 18-14z" fill="#dff1fb" />
            <path d="M12 0l24 8-18 14z" fill="#2aa4ef" />
          </svg>
          <div className="absolute bottom-[18px] left-[11px] flex h-[24px] w-[41px] items-center justify-center rounded-full bg-[#6fd0d8] text-[15px] leading-none text-[#101818]">
            99+
          </div>
        </TaskSlot>
        <TaskSlot>
          <svg viewBox="0 0 36 32" className="h-8 w-9">
            <path d="M0 3a2 2 0 0 1 2-2h11l4 4h17a2 2 0 0 1 2 2v4H0z" fill="#e8a623" />
            <rect x="0" y="8" width="36" height="24" rx="2" fill="#fcd15a" />
            <rect x="13" y="21" width="23" height="11" rx="1" fill="#1a7fd4" />
            <rect x="18" y="25" width="12" height="2" fill="#d8eefc" />
          </svg>
        </TaskSlot>
        <TaskSlot dot>
          <div className="flex h-[33px] w-[33px] items-center justify-center rounded-full border border-white bg-[conic-gradient(#ef5a4a_0_20%,#f6a623_20%_40%,#6cc04a_40%_60%,#2aa4ef_60%_80%,#a24ac8_80%_100%)]">
            <div className="h-[19px] w-[19px] rounded-full bg-white" />
          </div>
        </TaskSlot>
        <TaskSlot dot>
          <svg viewBox="0 0 36 36" className="h-9 w-9">
            <path d="M18 18L3 9a17 17 0 0 1 30 0z" fill="#e8453c" />
            <path d="M18 18l15-9a17 17 0 0 1-15 26z" fill="#fbbc05" />
            <path d="M18 18v17A17 17 0 0 1 3 9z" fill="#34a853" />
            <circle cx="18" cy="18" r="7.5" fill="#4285f4" stroke="#fff" strokeWidth="2" />
          </svg>
          <div className="absolute -right-[8px] -top-[8px] h-[25px] w-[25px] rounded-full border border-[#b8c0c8] bg-[#8d979f]" />
        </TaskSlot>
        <TaskSlot active>
          <AppLogo cls="h-[38px] w-[34px]" />
        </TaskSlot>
        <TaskSlot dot>
          <svg viewBox="0 0 36 36" className="h-9 w-9">
            <rect width="36" height="36" fill="#f03030" />
            <path d="M11 2l5 6M25 2l-5 6" stroke="#fff" strokeWidth="1.6" />
            <ellipse cx="18" cy="21" rx="9" ry="12" fill="#fff" />
            <circle cx="14" cy="20" r="3.4" fill="#f03030" />
            <circle cx="22" cy="20" r="3.4" fill="#f03030" />
            <circle cx="18" cy="28" r="3" fill="#f03030" />
          </svg>
        </TaskSlot>
        <TaskSlot dot>
          <svg viewBox="0 0 32 36" className="h-9 w-8">
            <rect x="4" y="1" width="26" height="34" rx="2" fill="#4a8eb4" />
            <rect x="0" y="2" width="26" height="32" rx="2" fill="#6fb2d2" />
            <circle cx="14" cy="18" r="9" fill="#ef8a2a" />
            <path d="M11 13l8 5-8 5z" fill="#fff" />
          </svg>
        </TaskSlot>
      </div>
      <div className="ml-[213px] flex w-4 justify-center"><ChevronUp className="h-7 w-7 shrink-0 text-[#ddd]" strokeWidth={1.2} /></div>
      <div className="ml-[29px] flex w-[40px] flex-col items-center text-[15.5px] leading-[23px]">
        <span>ENG</span>
        <span>IN</span>
      </div>
      <Wifi className="ml-[26px] h-5 w-5" strokeWidth={2.2} />
      <Volume2 className="ml-[15px] h-6 w-6" strokeWidth={1.5} />
      <svg viewBox="0 0 20 20" className="ml-[15px] h-5 w-5" fill="none" stroke="#fff" strokeWidth="1.6">
        <rect x="6" y="4" width="12" height="13" rx="1.5" />
        <rect x="10" y="7" width="6" height="8" fill="#fff" stroke="none" />
        <path d="M1 7h6v5H1zM2 3v4M5 3v4" fill="#fff" />
      </svg>
      <div className="ml-[14px] flex w-[100px] flex-col items-end text-[17.5px] leading-[24px]">
        <span>22:30</span>
        <span>21-04-2022</span>
      </div>
      <div className="ml-[10px] flex h-[24px] w-[25px] items-center justify-center rounded-full bg-[#6fd0d8] text-[14px] text-[#101818]">3</div>
    </div>
  );
}

export default function App() {
  return (
    <div className="flex h-[1080px] w-[1920px] flex-col overflow-hidden bg-[#f0f0f0]">
      <div className="flex h-[34px] items-center bg-white font-['Noto_Sans',sans-serif] text-[17.3px] text-[#111]">
        <AppLogo cls="ml-[3px] h-[26px] w-[22px]" />
        <svg viewBox="0 0 12 12" className="ml-[9px] h-3 w-3">
          <rect x="1" y="0" width="4" height="12" fill="#222" />
          <rect x="7" y="0" width="4" height="12" fill="#222" />
        </svg>
        <span className="ml-[6px]">SimulIDE-1.0.0-RC2 R1007 - backup.sim1</span>
        <Minus className="ml-auto mr-px h-[18px] w-[18px] text-[#222]" strokeWidth={1.2} />
        <svg viewBox="0 0 16 16" className="ml-[51px] h-[16px] w-[16px]" fill="none" stroke="#222" strokeWidth="1.2">
          <rect x="1" y="4" width="11" height="11" rx="2" />
          <path d="M4 1.5h8a3 3 0 0 1 3 3V12" />
        </svg>
        <X className="ml-[52px] mr-[27px] h-[20px] w-[20px] text-[#222]" strokeWidth={1.3} />
      </div>
      <div className="flex h-[973px]">
        <Tabs />
        <Tree />
        <div className="flex w-[1776px] flex-col">
          <Toolbar />
          <div className="flex h-[918px]">
            <div className="ml-[7px] flex w-[1620px] flex-col">
              <Canvas />
              <div className="h-[7px]" />
              <Output />
            </div>
            <div className="ml-[6px] flex w-[143px] flex-col">
              <div className="h-[676px] border border-[#aaa] bg-white" />
              <div className="h-[8px]" />
              <div className="flex-1 border-t border-[#aaa] bg-[#231f3f]" />
            </div>
          </div>
        </div>
      </div>
      <Taskbar />
    </div>
  );
}
